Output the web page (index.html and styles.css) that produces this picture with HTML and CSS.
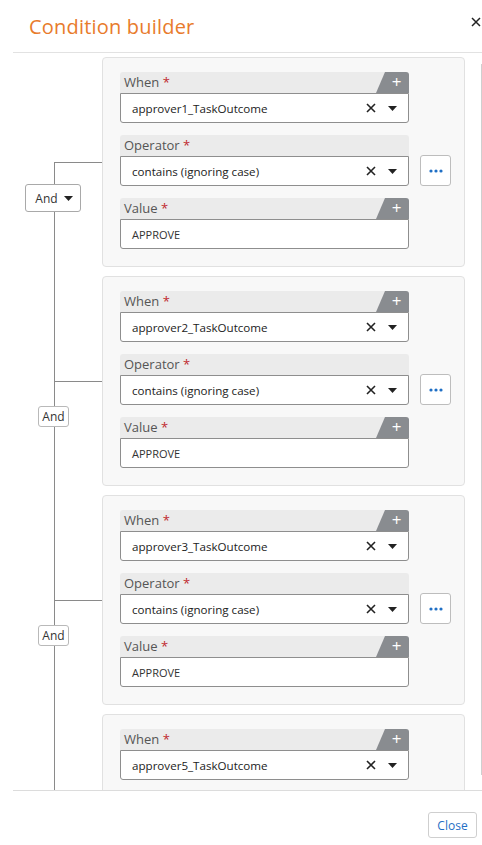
FILE: index.html
```html
<!DOCTYPE html>
<html>
<head>
<meta charset="utf-8">
<link rel="stylesheet" href="styles.css">
</head>
<body>
<div class="modal">
  <div class="header">
    <div class="title">Condition builder</div>
    <svg class="hclose" width="10" height="10" viewBox="0 0 10 10"><path d="M1 1L9 9M9 1L1 9" stroke="#222" stroke-width="1.5"/></svg>
  </div>
  <div class="main">
    <div class="tree">

      <div class="row">
        <div class="conn">
          <div class="ctop first"></div>
          <div class="cbot"><button class="andsel">And <svg width="9" height="5" viewBox="0 0 9 5"><path d="M0 0H9L4.5 5Z" fill="#222"/></svg></button></div>
        </div>
        <div class="card">
          <div class="field">
            <div class="lab"><span class="ltxt">When <em>*</em></span><span class="tab">+</span></div>
            <div class="inp"><span class="val">approver1_TaskOutcome</span><svg class="x" width="10" height="10" viewBox="0 0 10 10"><path d="M1 1L9 9M9 1L1 9" stroke="#222" stroke-width="1.6"/></svg><svg width="9" height="5" viewBox="0 0 9 5"><path d="M0 0H9L4.5 5Z" fill="#222"/></svg></div>
          </div>
          <div class="oprow">
            <div class="field">
              <div class="lab"><span class="ltxt">Operator <em>*</em></span></div>
              <div class="inp"><span class="val">contains (ignoring case)</span><svg class="x" width="10" height="10" viewBox="0 0 10 10"><path d="M1 1L9 9M9 1L1 9" stroke="#222" stroke-width="1.6"/></svg><svg width="9" height="5" viewBox="0 0 9 5"><path d="M0 0H9L4.5 5Z" fill="#222"/></svg></div>
            </div>
            <button class="dots"><svg width="14" height="4" viewBox="0 0 14 4"><circle cx="2" cy="2" r="1.6" fill="#1f6fc5"/><circle cx="7" cy="2" r="1.6" fill="#1f6fc5"/><circle cx="12" cy="2" r="1.6" fill="#1f6fc5"/></svg></button>
          </div>
          <div class="field">
            <div class="lab"><span class="ltxt">Value <em>*</em></span><span class="tab">+</span></div>
            <div class="inp"><span class="val caps">APPROVE</span></div>
          </div>
        </div>
      </div>

      <div class="row">
        <div class="conn">
          <div class="ctop"></div>
          <div class="cbot"><span class="andlbl">And</span></div>
        </div>
        <div class="card">
          <div class="field">
            <div class="lab"><span class="ltxt">When <em>*</em></span><span class="tab">+</span></div>
            <div class="inp"><span class="val">approver2_TaskOutcome</span><svg class="x" width="10" height="10" viewBox="0 0 10 10"><path d="M1 1L9 9M9 1L1 9" stroke="#222" stroke-width="1.6"/></svg><svg width="9" height="5" viewBox="0 0 9 5"><path d="M0 0H9L4.5 5Z" fill="#222"/></svg></div>
          </div>
          <div class="oprow">
            <div class="field">
              <div class="lab"><span class="ltxt">Operator <em>*</em></span></div>
              <div class="inp"><span class="val">contains (ignoring case)</span><svg class="x" width="10" height="10" viewBox="0 0 10 10"><path d="M1 1L9 9M9 1L1 9" stroke="#222" stroke-width="1.6"/></svg><svg width="9" height="5" viewBox="0 0 9 5"><path d="M0 0H9L4.5 5Z" fill="#222"/></svg></div>
            </div>
            <button class="dots"><svg width="14" height="4" viewBox="0 0 14 4"><circle cx="2" cy="2" r="1.6" fill="#1f6fc5"/><circle cx="7" cy="2" r="1.6" fill="#1f6fc5"/><circle cx="12" cy="2" r="1.6" fill="#1f6fc5"/></svg></button>
          </div>
          <div class="field">
            <div class="lab"><span class="ltxt">Value <em>*</em></span><span class="tab">+</span></div>
            <div class="inp"><span class="val caps">APPROVE</span></div>
          </div>
        </div>
      </div>

      <div class="row">
        <div class="conn">
          <div class="ctop"></div>
          <div class="cbot"><span class="andlbl">And</span></div>
        </div>
        <div class="card">
          <div class="field">
            <div class="lab"><span class="ltxt">When <em>*</em></span><span class="tab">+</span></div>
            <div class="inp"><span class="val">approver3_TaskOutcome</span><svg class="x" width="10" height="10" viewBox="0 0 10 10"><path d="M1 1L9 9M9 1L1 9" stroke="#222" stroke-width="1.6"/></svg><svg width="9" height="5" viewBox="0 0 9 5"><path d="M0 0H9L4.5 5Z" fill="#222"/></svg></div>
          </div>
          <div class="oprow">
            <div class="field">
              <div class="lab"><span class="ltxt">Operator <em>*</em></span></div>
              <div class="inp"><span class="val">contains (ignoring case)</span><svg class="x" width="10" height="10" viewBox="0 0 10 10"><path d="M1 1L9 9M9 1L1 9" stroke="#222" stroke-width="1.6"/></svg><svg width="9" height="5" viewBox="0 0 9 5"><path d="M0 0H9L4.5 5Z" fill="#222"/></svg></div>
            </div>
            <button class="dots"><svg width="14" height="4" viewBox="0 0 14 4"><circle cx="2" cy="2" r="1.6" fill="#1f6fc5"/><circle cx="7" cy="2" r="1.6" fill="#1f6fc5"/><circle cx="12" cy="2" r="1.6" fill="#1f6fc5"/></svg></button>
          </div>
          <div class="field">
            <div class="lab"><span class="ltxt">Value <em>*</em></span><span class="tab">+</span></div>
            <div class="inp"><span class="val caps">APPROVE</span></div>
          </div>
        </div>
      </div>

      <div class="row">
        <div class="conn">
          <div class="ctop"></div>
          <div class="cbot"></div>
        </div>
        <div class="card cut">
          <div class="field">
            <div class="lab"><span class="ltxt">When <em>*</em></span><span class="tab">+</span></div>
            <div class="inp"><span class="val">approver5_TaskOutcome</span><svg class="x" width="10" height="10" viewBox="0 0 10 10"><path d="M1 1L9 9M9 1L1 9" stroke="#222" stroke-width="1.6"/></svg><svg width="9" height="5" viewBox="0 0 9 5"><path d="M0 0H9L4.5 5Z" fill="#222"/></svg></div>
          </div>
        </div>
      </div>

    </div>
    <div class="sbar"></div>
  </div>
  <div class="footer">
    <button class="closebtn">Close</button>
  </div>
</div>
</body>
</html>
```

FILE: styles.css
```css
* { box-sizing: border-box; }
html, body { margin: 0; padding: 0; background: #fff; }
body { font-family: "Open Sans", "Liberation Sans", sans-serif; color: #222; }

.modal {
  margin-left: 13px;
  width: 469px;
  height: 845px;
  display: flex;
  flex-direction: column;
  overflow: hidden;
}

.header {
  height: 53px;
  flex: none;
  border-bottom: 1px solid #e2e2e2;
  display: flex;
  align-items: center;
  justify-content: space-between;
  padding: 0 1px 0 16px;
}
.title {
  font-size: 20px;
  color: #e87b2c;
  letter-spacing: 0.2px;
}
.hclose { margin-bottom: 8px; }

.main {
  height: 737px;
  flex: none;
  display: flex;
  overflow: hidden;
}
.tree {
  width: 452px;
  flex: none;
  padding-top: 4px;
}
.sbar {
  margin-left: 16px;
  margin-top: 11px;
  height: 711px;
  width: 1px;
  background: #cfcfcf;
}

.row { display: flex; }
.conn {
  width: 89px;
  flex: none;
  display: flex;
  flex-direction: column;
}
.ctop {
  height: 105px;
  flex: none;
  margin-left: 41px;
  border-left: 1px solid #8a8a8a;
}
.ctop.first { border-left-color: transparent; }
.cbot {
  flex: 1;
  margin-left: 41px;
  border-top: 1px solid #8a8a8a;
  border-left: 1px solid #8a8a8a;
}

.andsel {
  display: flex;
  align-items: center;
  justify-content: center;
  gap: 6px;
  margin: 21px 0 0 -30px;
  width: 56px;
  height: 28px;
  padding: 0 0 0 2px;
  background: #fff;
  border: 1px solid #a9a9a9;
  border-radius: 3px;
  font-family: inherit;
  font-size: 12px;
  color: #333;
}
.andlbl {
  display: flex;
  align-items: center;
  justify-content: center;
  margin: 24px 0 0 -17px;
  width: 31px;
  height: 21px;
  background: #fff;
  border: 1px solid #b9b9b9;
  border-radius: 3px;
  font-size: 12px;
  color: #333;
}

.card {
  width: 363px;
  flex: none;
  margin-bottom: 9px;
  background: #f8f8f8;
  border: 1px solid #e1e1e1;
  border-radius: 4px;
  padding: 14px 13px 17px 17px;
}
.card.cut { height: 210px; }

.field { width: 289px; flex: none; }
.field + .oprow, .oprow + .field { margin-top: 12px; }
.oprow {
  display: flex;
  align-items: flex-end;
  gap: 11px;
}

.lab {
  height: 21px;
  display: flex;
  align-items: stretch;
  background: #ebebeb;
  border-radius: 3px 3px 0 0;
}
.ltxt {
  flex: 1;
  padding-left: 4px;
  font-size: 13px;
  line-height: 21px;
  color: #555;
}
.ltxt em {
  font-style: normal;
  color: #c0282d;
}
.tab {
  width: 33px;
  background: #898c90;
  clip-path: polygon(9px 0, 100% 0, 100% 100%, 0 100%);
  border-top-right-radius: 3px;
  color: #fff;
  font-size: 17px;
  line-height: 20px;
  text-align: center;
  padding-left: 8px;
}

.inp {
  height: 30px;
  display: flex;
  align-items: center;
  background: #fff;
  border: 1px solid #8e8e8e;
  border-radius: 0 0 3px 3px;
  padding: 0 11px 0 11px;
}
.val {
  flex: 1;
  font-size: 11.6px;
  color: #222;
}
.val.caps { font-size: 11px; color: #333; }
.x { margin-right: 12px; }

.dots {
  width: 31px;
  height: 31px;
  padding: 0;
  display: flex;
  align-items: center;
  justify-content: center;
  background: #fff;
  border: 1px solid #bdbdbd;
  border-radius: 3px;
}

.footer {
  flex: 1;
  border-top: 1px solid #dcdcdc;
  display: flex;
  justify-content: flex-end;
  align-items: flex-start;
  padding: 21px 5px 0 0;
}
.closebtn {
  width: 49px;
  height: 26px;
  padding: 0;
  background: #fff;
  border: 1px solid #cfcfcf;
  border-radius: 3px;
  font-family: inherit;
  font-size: 12px;
  color: #1f6fc5;
}
```
